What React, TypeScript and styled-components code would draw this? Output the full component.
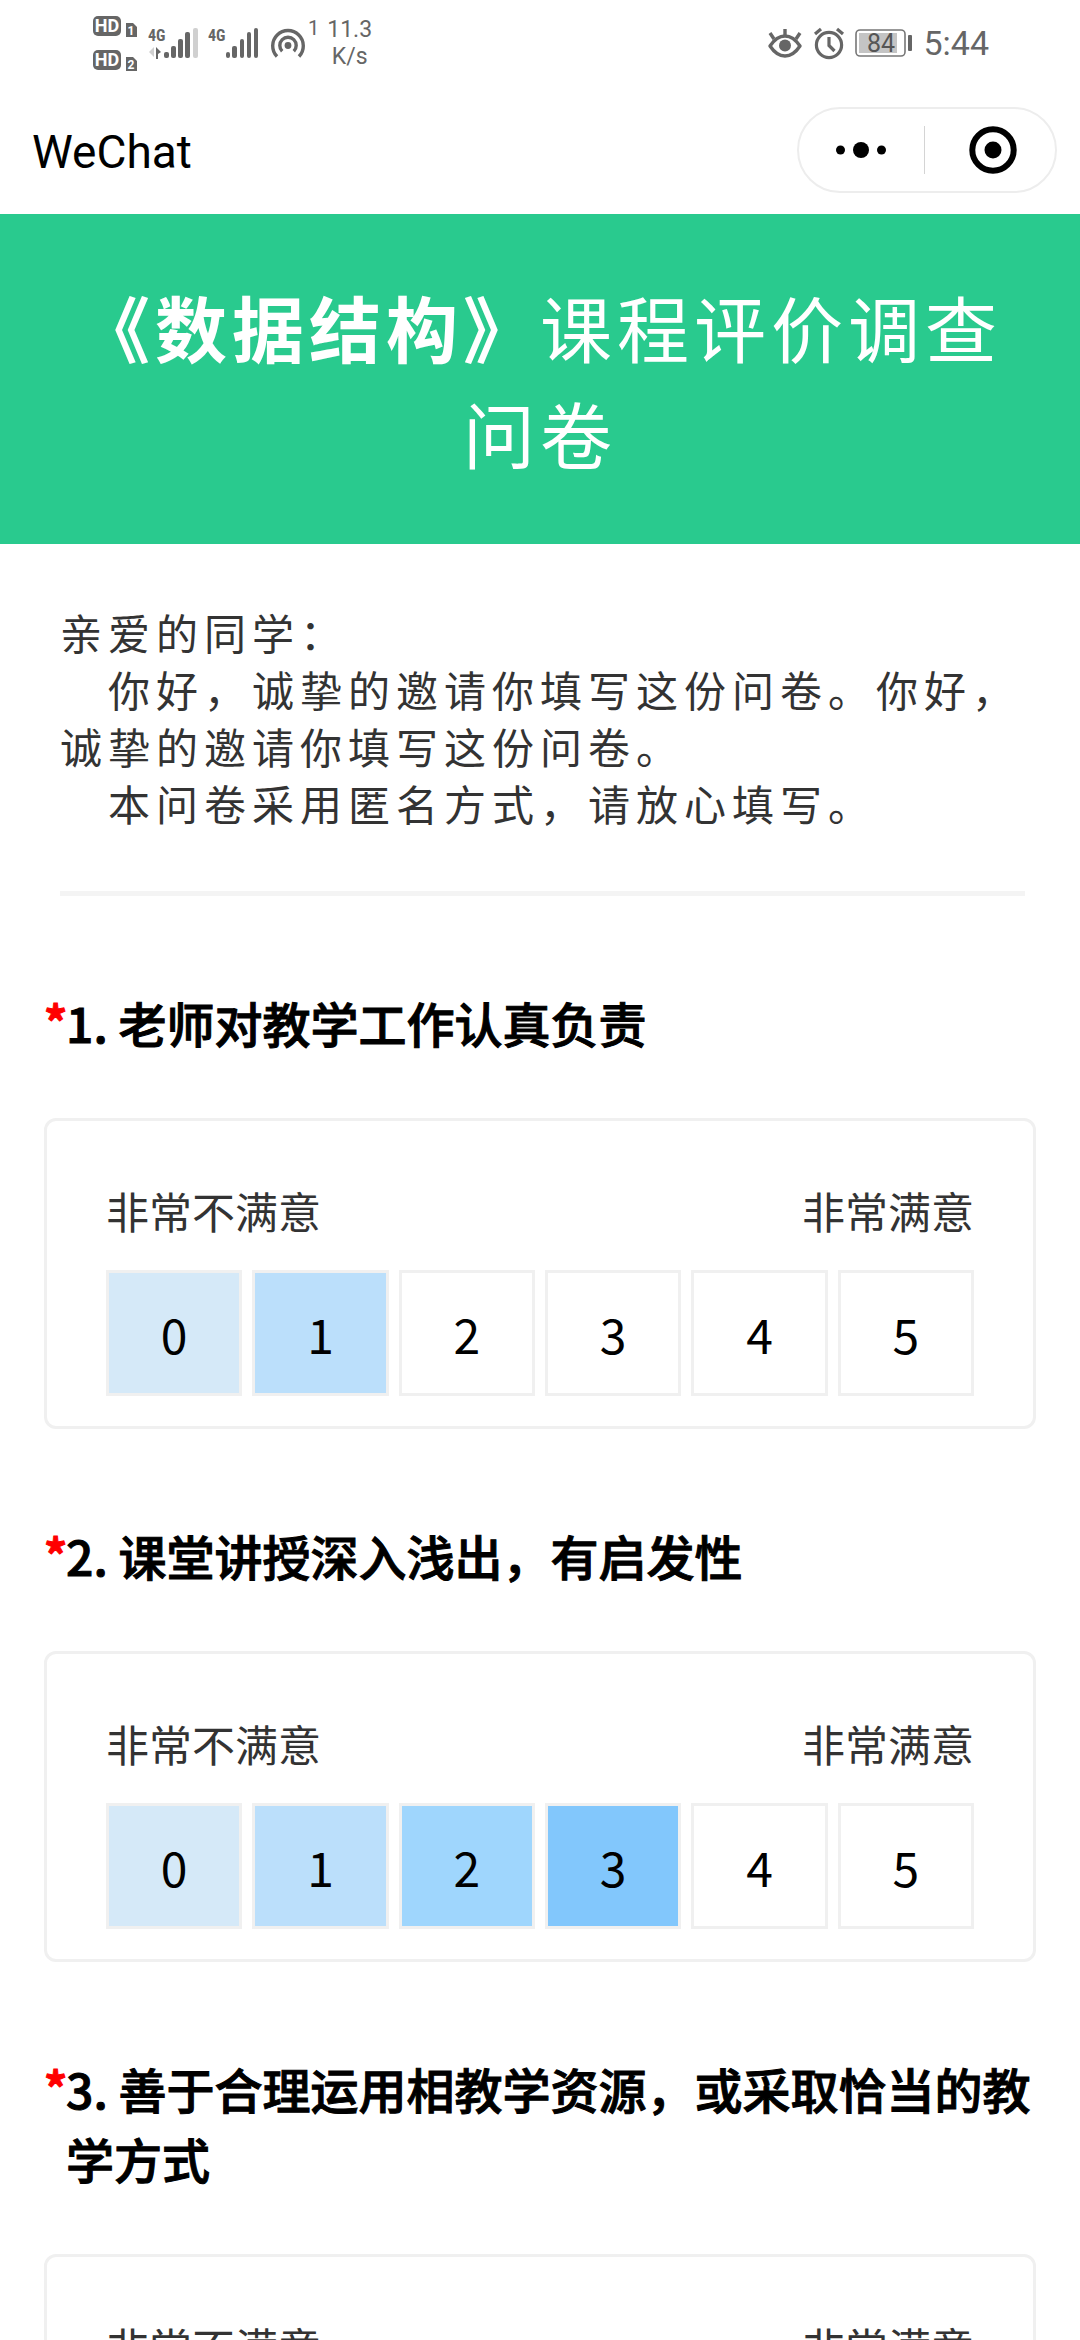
import React, { useState } from "react";
import styled, { createGlobalStyle } from "styled-components";

const GlobalStyle = createGlobalStyle`
  *, *::before, *::after { box-sizing: border-box; }
  body {
    margin: 0;
    background: #fff;
    color: #000;
    font-family: "Noto Sans CJK SC", "Noto Sans", sans-serif;
  }
`;

const Screen = styled.div`
  display: flex;
  flex-direction: column;
  height: 100vh;
  overflow: hidden;
`;

const StatusBar = styled.div`
  display: flex;
  flex: none;
  align-items: center;
  justify-content: space-between;
  height: 85px;
  padding: 0 91px 0 92px;
  color: #666;
  font-family: Roboto, sans-serif;
`;

const StatusGroup = styled.div<{ $gap: number }>`
  display: flex;
  align-items: center;
  gap: ${(p) => p.$gap}px;

  svg {
    display: block;
    flex: none;
  }
`;

const HotspotCount = styled.span`
  align-self: flex-start;
  margin-top: -8px;
  font-size: 20px;
  line-height: 20px;
`;

const Speed = styled.div`
  font-size: 23px;
  line-height: 27px;
  text-align: center;
`;

const Clock = styled.time`
  font-size: 34px;
  line-height: 40px;
`;

const NavBar = styled.header`
  display: flex;
  flex: none;
  align-items: center;
  justify-content: space-between;
  height: 129px;
  padding: 0 23px 0 32px;
`;

const AppName = styled.span`
  padding-top: 4px;
  font-family: Roboto, sans-serif;
  font-size: 46px;
  line-height: 54px;
`;

const Capsule = styled.div`
  display: flex;
  align-items: center;
  width: 260px;
  height: 86px;
  border: 2px solid #ededed;
  border-radius: 43px;
`;

const CapsuleButton = styled.button`
  display: flex;
  flex: 1;
  align-items: center;
  justify-content: center;
  height: 100%;
  padding: 0;
  border: 0;
  background: none;
`;

const CapsuleDivider = styled.span`
  width: 1px;
  height: 48px;
  margin-right: 6px;
  background: #d4d4d4;
`;

const Content = styled.main`
  flex: 1;
  min-height: 0;
  overflow-y: auto;
  scrollbar-width: none;
`;

const Banner = styled.h1`
  margin: 0;
  padding: 59px 60px;
  background: #29ca8e;
  color: #fff;
  font-size: 72px;
  font-weight: 400;
  line-height: 106px;
  letter-spacing: 5px;
  text-align: center;
`;

const Intro = styled.section`
  margin: 0 55px 0 60px;
  padding: 59px 0 60px;
  border-bottom: 5px solid #f4f4f4;
  color: #333;
  font-size: 42px;
  line-height: 57px;
  letter-spacing: 6px;
`;

const Paragraph = styled.p<{ $indent?: boolean }>`
  margin: 0;
  text-indent: ${(p) => (p.$indent ? 48 : 0)}px;
`;

const Questions = styled.form`
  display: flex;
  flex-direction: column;
  gap: 91px;
  padding: 91px 44px;
`;

const Question = styled.fieldset`
  min-width: 0;
  margin: 0;
  padding: 0;
  border: 0;
`;

const QuestionTitle = styled.legend`
  display: flex;
  width: 100%;
  padding: 0 0 61px;
  font-size: 48px;
  font-weight: 500;
  line-height: 70px;
  -webkit-text-stroke: 1px;
`;

const Required = styled.span`
  flex: none;
  width: 22px;
  color: #f00;
  font-weight: 700;
  font-size: 46px;
  line-height: 66px;
`;

const Card = styled.div`
  padding: 57px 59px 30px;
  border: 3px solid #f0f0f0;
  border-radius: 12px;
`;

const ScaleEnds = styled.div`
  display: flex;
  justify-content: space-between;
  padding-top: 1px;
  color: #333;
  font-size: 43px;
  line-height: 62px;
`;

const Scale = styled.div`
  display: flex;
  gap: 10px;
  margin-top: 29px;
`;

const levelColors = ["#d5e9f8", "#bbdffb", "#9fd6fd", "#82c7fc", "#66b8fa", "#4aa9f8"];

const Score = styled.label<{ $fill: string }>`
  position: relative;
  display: flex;
  flex: 1;
  align-items: center;
  justify-content: center;
  height: 126px;
  border: 3px solid #f0f0f0;
  background: ${(p) => p.$fill};
  font-size: 48px;
  line-height: 70px;
  cursor: pointer;
`;

const ScoreInput = styled.input`
  position: absolute;
  inset: 0;
  width: 100%;
  height: 100%;
  margin: 0;
  opacity: 0;
  cursor: pointer;
`;

const HdIcon = () => (
  <svg width="48" height="58" viewBox="0 0 48 58" fill="#666" aria-label="HD 1 HD 2">
    {[0, 34].map((y, i) => (
      <g key={y} transform={`translate(0 ${y})`}>
        <rect x="1" y="2" width="28" height="20" rx="5" />
        <text x="15" y="18" textAnchor="middle" fontFamily="Roboto" fontWeight="700" fontSize="18" fill="#fff">HD</text>
        <path d="M34 9h7l4 4v10H34z" />
        <text x="39" y="21" textAnchor="middle" fontFamily="Roboto" fontWeight="700" fontSize="12" fill="#fff">{i + 1}</text>
      </g>
    ))}
  </svg>
);

const SignalFadedIcon = () => (
  <svg width="52" height="34" viewBox="0 0 52 34" fill="#666" aria-label="4G">
    <text x="0" y="15" fontFamily="Roboto Condensed, Roboto" fontWeight="700" fontSize="16">4G</text>
    <path d="M1 26l5-5v10z" fill="#d0d0d0" />
    <path d="M8 21l5 5-3 2v5H8z" />
    <rect x="16" y="26" width="5" height="6" rx="2" />
    <rect x="23" y="20" width="5" height="12" rx="2" />
    <rect x="30" y="13" width="5" height="19" rx="2" />
    <rect x="37" y="6" width="5" height="26" rx="2" />
    <rect x="45" y="2" width="5" height="30" rx="2" fill="#d0d0d0" />
  </svg>
);

const SignalIcon = () => (
  <svg width="54" height="34" viewBox="0 0 54 34" fill="#666" aria-label="4G">
    <text x="0" y="15" fontFamily="Roboto Condensed, Roboto" fontWeight="700" fontSize="16">4G</text>
    <rect x="18" y="26" width="4" height="6" rx="2" />
    <rect x="24" y="20" width="5" height="12" rx="2" />
    <rect x="32" y="13" width="4" height="19" rx="2" />
    <rect x="39" y="6" width="4" height="26" rx="2" />
    <rect x="46" y="2" width="4" height="30" rx="2" />
  </svg>
);

const HotspotIcon = () => (
  <svg width="36" height="34" viewBox="0 0 36 34" fill="none" stroke="#666" strokeWidth="3.4" aria-label="Hotspot">
    <path d="M7 30.5A15.3 15.3 0 1 1 29 30.5" />
    <path d="M12.2 25.2A8.2 8.2 0 1 1 23.8 25.2" />
    <circle cx="18" cy="19.5" r="3.4" fill="#666" stroke="none" />
  </svg>
);

const EyeIcon = () => (
  <svg width="36" height="34" viewBox="0 0 36 34" fill="none" stroke="#666" strokeWidth="3.4" aria-label="Eye comfort">
    <path d="M3 20C8 12.500 12.500 10 18 10s10 2.500 15 10c-5 7.500-9.500 10-15 10S8 27.500 3 20z" strokeLinejoin="round" />
    <circle cx="18" cy="19.500" r="6" fill="#666" stroke="none" />
    <path d="M18 3v7M3 7l4 6M33 7l-4 6" />
  </svg>
);

const AlarmIcon = () => (
  <svg width="32" height="34" viewBox="0 0 32 34" fill="none" stroke="#666" strokeWidth="3.2" aria-label="Alarm">
    <circle cx="16" cy="19" r="12.600" />
    <path d="M16 11v8.500l5.500 5.500" />
    <path d="M2 8l6-5M30 8l-6-5" />
  </svg>
);

const BatteryIcon = () => (
  <svg width="58" height="30" viewBox="0 0 58 30" aria-label="84%">
    <rect x="1" y="2" width="49" height="26" rx="4" fill="none" stroke="#777" strokeWidth="1.600" />
    <rect x="4" y="5" width="38" height="20" fill="#c4c4c4" />
    <rect x="53" y="7" width="4" height="16" rx="1" fill="#666" />
    <text x="26" y="24" textAnchor="middle" fontFamily="Roboto" fontSize="25" fill="#555">84</text>
  </svg>
);

const MoreIcon = () => (
  <svg width="52" height="18" viewBox="0 0 52 18" fill="#000">
    <circle cx="5.500" cy="9" r="4.500" />
    <circle cx="26" cy="9" r="8" />
    <circle cx="46.500" cy="9" r="4.500" />
  </svg>
);

const TargetIcon = () => (
  <svg width="48" height="48" viewBox="0 0 48 48">
    <circle cx="24" cy="24" r="20.700" fill="none" stroke="#000" strokeWidth="6" />
    <circle cx="24" cy="24" r="8.500" fill="#000" />
  </svg>
);

const initialQuestions = [
  { id: 1, title: "老师对教学工作认真负责", score: 1 },
  { id: 2, title: "课堂讲授深入浅出，有启发性", score: 3 },
  { id: 3, title: "善于合理运用相教学资源，或采取恰当的教学方式", score: -1 },
];

function RatingQuestion({ id, title, score }: { id: number; title: string; score: number }) {
  const [value, setValue] = useState(score);
  return (
    <Question>
      <QuestionTitle>
        <Required>*</Required>
        <span>{id}. {title}</span>
      </QuestionTitle>
      <Card>
        <ScaleEnds>
          <span>非常不满意</span>
          <span>非常满意</span>
        </ScaleEnds>
        <Scale>
          {levelColors.map((color, level) => (
            <Score key={level} $fill={level <= value ? color : "#fff"}>
              <ScoreInput
                type="radio"
                name={`question-${id}`}
                value={level}
                checked={value === level}
                onChange={() => setValue(level)}
              />
              {level}
            </Score>
          ))}
        </Scale>
      </Card>
    </Question>
  );
}

export default function App() {
  return (
    <Screen>
      <GlobalStyle />
      <StatusBar>
        <StatusGroup $gap={8}>
          <HdIcon />
          <SignalFadedIcon />
          <SignalIcon />
          <StatusGroup $gap={2}>
            <HotspotIcon />
            <HotspotCount>1</HotspotCount>
          </StatusGroup>
          <Speed>
            11.3
            <br />
            K/s
          </Speed>
        </StatusGroup>
        <StatusGroup $gap={10}>
          <EyeIcon />
          <AlarmIcon />
          <BatteryIcon />
          <Clock>5:44</Clock>
        </StatusGroup>
      </StatusBar>

      <NavBar>
        <AppName>WeChat</AppName>
        <Capsule>
          <CapsuleButton type="button" aria-label="More">
            <MoreIcon />
          </CapsuleButton>
          <CapsuleDivider />
          <CapsuleButton type="button" aria-label="Close">
            <TargetIcon />
          </CapsuleButton>
        </Capsule>
      </NavBar>

      <Content>
        <Banner>
          <strong>《数据结构》</strong>课程评价调查问卷
        </Banner>
        <Intro>
          <Paragraph>亲爱的同学：</Paragraph>
          <Paragraph $indent>你好，诚挚的邀请你填写这份问卷。你好，诚挚的邀请你填写这份问卷。</Paragraph>
          <Paragraph $indent>本问卷采用匿名方式，请放心填写。</Paragraph>
        </Intro>
        <Questions>
          {initialQuestions.map((q) => (
            <RatingQuestion key={q.id} {...q} />
          ))}
        </Questions>
      </Content>
    </Screen>
  );
}
